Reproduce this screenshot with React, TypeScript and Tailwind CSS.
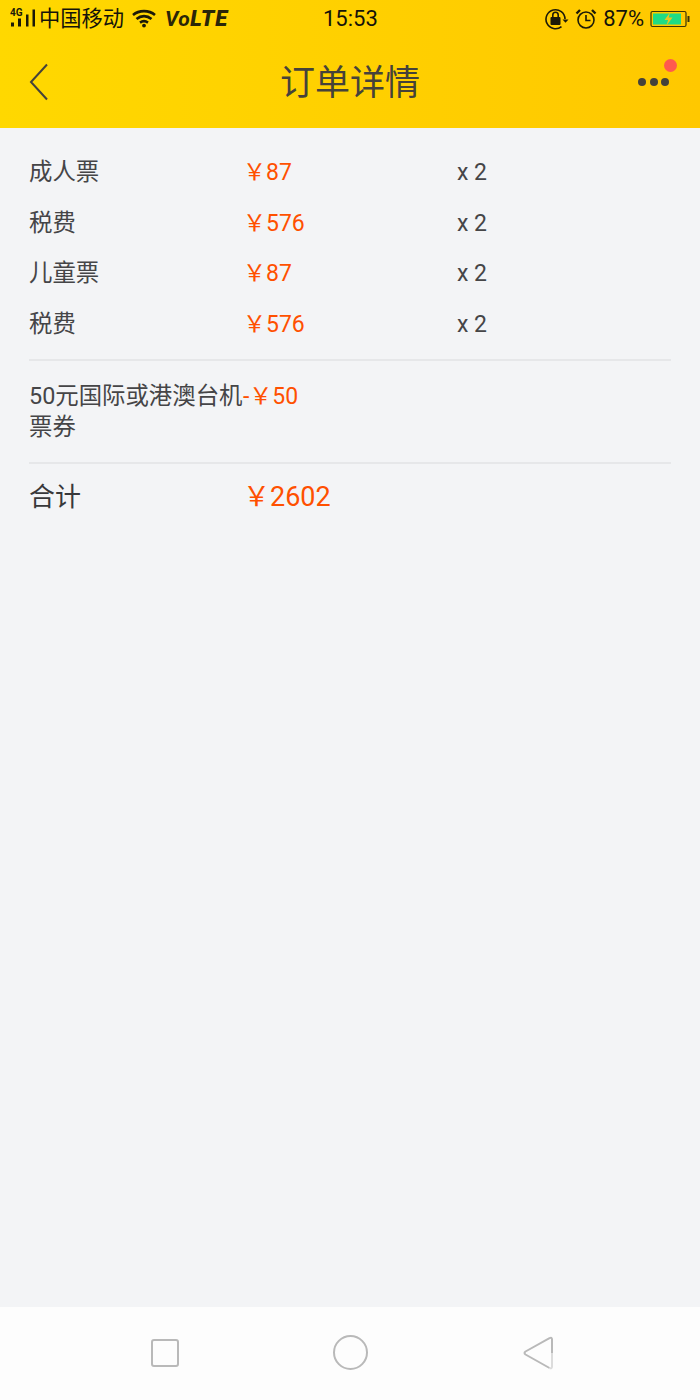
const fontStack = "font-['Roboto','Noto_Sans_CJK_SC',sans-serif]"

const fareRows = [
  { label: '成人票', price: '￥87', count: 'x 2' },
  { label: '税费', price: '￥576', count: 'x 2' },
  { label: '儿童票', price: '￥87', count: 'x 2' },
  { label: '税费', price: '￥576', count: 'x 2' },
]

function SignalIcon() {
  return (
    <svg width="26" height="22" viewBox="0 0 26 22" className="text-[#1c1a08]">
      <text x="0" y="8" fontSize="10" fontWeight="700" fill="currentColor" fontFamily="Roboto, sans-serif">4G</text>
      <rect x="1" y="14.5" width="3" height="4" fill="currentColor" />
      <rect x="8" y="10.5" width="3" height="8" fill="currentColor" />
      <rect x="16" y="6.5" width="2.5" height="12" fill="currentColor" />
      <rect x="22.5" y="1.5" width="2.5" height="17" fill="currentColor" />
    </svg>
  )
}

function WifiIcon() {
  return (
    <svg width="24" height="19" viewBox="0 0 24 19" fill="none" stroke="#1c1a08" strokeWidth="2.6">
      <path d="M1 6C7 0.8 17 0.8 23 6" />
      <path d="M4.5 10C9 6.2 15 6.2 19.5 10" />
      <path d="M8 13.6C10.5 11.8 13.5 11.8 16 13.6" />
      <circle cx="12" cy="16.6" r="1.9" fill="#1c1a08" stroke="none" />
    </svg>
  )
}

function LockRotateIcon() {
  return (
    <svg width="24" height="22" viewBox="0 0 24 22" fill="none" stroke="#1c1a08" strokeWidth="1.6">
      <path d="M20 11A9.5 9.5 0 1 0 16.5 18.6" />
      <path d="M17.5 11.5h6l-3 3.2z" fill="#1c1a08" stroke="none" />
      <rect x="5.5" y="9" width="10" height="8" rx="1" fill="#1c1a08" stroke="none" />
      <path d="M7.8 9V7a2.7 2.7 0 0 1 5.4 0v2" />
    </svg>
  )
}

function AlarmIcon() {
  return (
    <svg width="22" height="22" viewBox="0 0 22 22" fill="none" stroke="#1c1a08" strokeWidth="1.6">
      <circle cx="11" cy="12" r="8" />
      <path d="M11 7v5.5h4.5" />
      <path d="M1.5 5.5 5 2M20.5 5.5 17 2" strokeWidth="2.4" />
    </svg>
  )
}

function BatteryIcon() {
  return (
    <svg width="40" height="18" viewBox="0 0 40 18">
      <rect x="1" y="1.5" width="35" height="15" rx="1.5" fill="none" stroke="#3a3408" strokeWidth="1.2" />
      <rect x="3" y="3.5" width="28" height="11" fill="#1fdc84" />
      <rect x="37.5" y="6" width="2" height="6" fill="#3a3408" />
      <path d="M20 2.5 14.5 10h3.6l-1.6 5.5 6-8h-3.8z" fill="#e8c81e" />
    </svg>
  )
}

function StatusBar() {
  return (
    <div className="relative flex h-[37px] items-center justify-between pl-[10px] pr-[10px] text-[#14130a]">
      <div className="flex items-center">
        <SignalIcon />
        <span className="ml-[3px] text-[21.25px] leading-none">中国移动</span>
        <span className="ml-[8px]"><WifiIcon /></span>
        <span className="ml-[9px] text-[21px] leading-none font-bold italic tracking-[0.5px] text-[#2a2608]">
          Vo<span className="text-[22px] font-black tracking-[1px]">LTE</span>
        </span>
      </div>
      <span className="absolute left-[323px] top-[6px] text-[22px] leading-[26px]">15:53</span>
      <div className="flex items-center">
        <LockRotateIcon />
        <span className="ml-[6px]"><AlarmIcon /></span>
        <span className="ml-[6px] text-[22px] leading-none">87%</span>
        <span className="ml-[6px]"><BatteryIcon /></span>
      </div>
    </div>
  )
}

function AppHeader() {
  return (
    <div className="h-[128px] bg-gradient-to-r from-[#ffd800] to-[#ffc800]">
      <StatusBar />
      <div className="relative flex h-[91px] items-center justify-center">
        <svg width="20" height="38" viewBox="0 0 20 38" fill="none" stroke="#45423a" strokeWidth="2" className="absolute left-[29px] top-[26px]">
          <path d="M18 1.5 2 19l16 17.5" />
        </svg>
        <h1 className="pt-[1px] text-[35px] leading-none font-normal text-[#45423a]">订单详情</h1>
        <div className="absolute left-[638px] top-[41px] flex gap-[3.5px]">
          <span className="size-[8px] rounded-full bg-[#45423a]" />
          <span className="size-[8px] rounded-full bg-[#45423a]" />
          <span className="size-[8px] rounded-full bg-[#45423a]" />
        </div>
        <span className="absolute left-[664px] top-[22px] size-[12.5px] rounded-full bg-[#ff5a4e]" />
      </div>
    </div>
  )
}

function NavBar() {
  return (
    <div className="flex h-[93px] items-center bg-[#fdfdfd] pb-[2px] pl-[151px]">
      <span className="size-[28px] rounded-[3px] border-2 border-[#b9b9b9]" />
      <span className="ml-[154px] size-[35px] rounded-full border-2 border-[#b9b9b9]" />
      <svg width="30" height="34" viewBox="0 0 30 34" fill="none" strokeWidth="2" strokeLinejoin="round" className="ml-[155px]">
        <path d="M29 17V3.5Q29 0.8 26.5 2.2L2.5 15.5Q0.5 17 2.5 18.5L26.5 32" stroke="#b9b9b9" />
        <path d="M26.5 32Q29 33.2 29 30.5V17" stroke="#dcdcdc" />
      </svg>
    </div>
  )
}

export default function App() {
  return (
    <div className={`flex h-[1400px] w-[700px] flex-col overflow-hidden bg-[#f3f4f6] ${fontStack}`}>
      <AppHeader />

      <main className="flex-1 px-[29px] pt-[19.5px]">
        <div className="border-b-2 border-[#e6e7e9] pb-[9.5px]">
          {fareRows.map((row, i) => (
            <div key={i} className="flex h-[50.5px] items-center text-[23px] leading-none">
              <span className="w-[214px] text-[23.4px] text-[#454547]">{row.label}</span>
              <span className="w-[214px] text-[#ff5000]">{row.price}</span>
              <span className="text-[#454547]">{row.count}</span>
            </div>
          ))}
        </div>

        <div className="flex border-b-2 border-[#e6e7e9] pt-[20px] pb-[19px] text-[23px] leading-[31px]">
          <span className="w-[214px] text-[23.4px] text-[#454547]">50元国际或港澳台机票券</span>
          <span className="text-[#ff5000]">-￥50</span>
        </div>

        <div className="flex items-center pt-[16px] leading-[34px]">
          <span className="w-[214px] text-[26px] text-[#38383a]">合计</span>
          <span className="text-[27px] text-[#ff5000]">￥2602</span>
        </div>
      </main>

      <NavBar />
    </div>
  )
}
